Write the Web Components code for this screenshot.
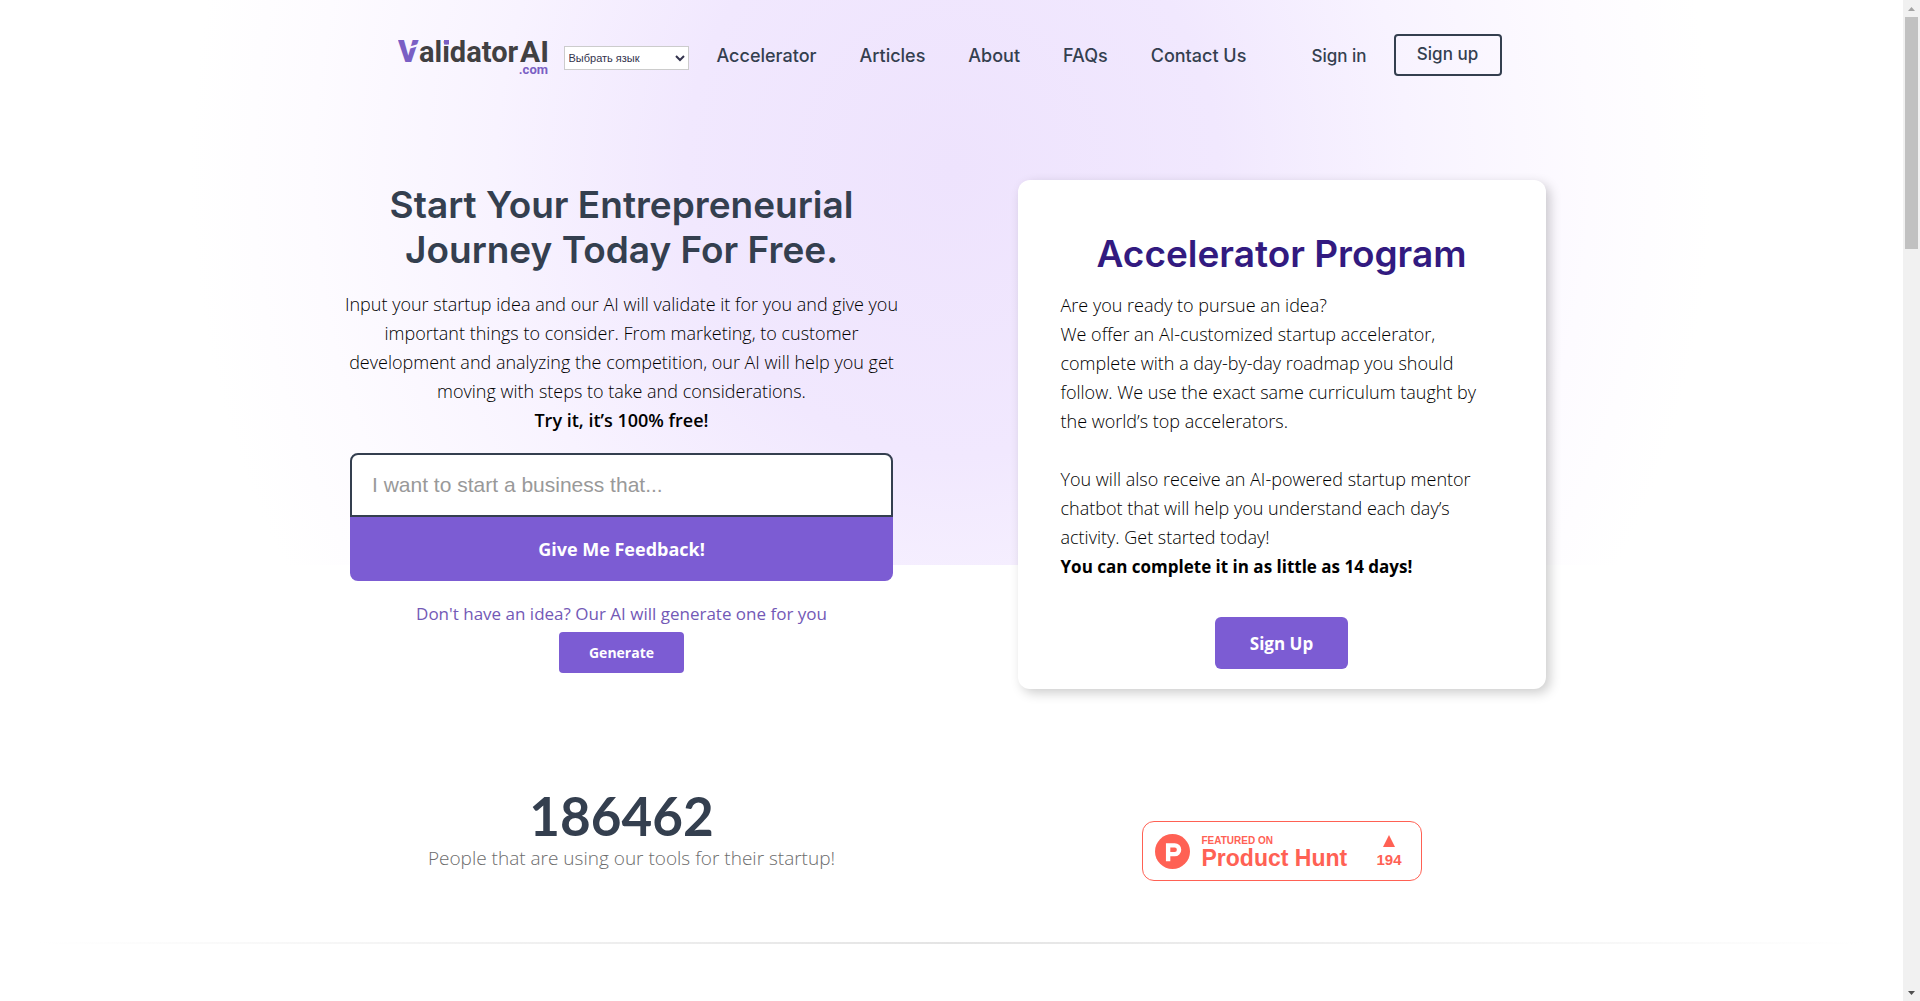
<!DOCTYPE html>
<html lang="en">
<head>
<meta charset="utf-8">
<title>ValidatorAI</title>
<style>
  body { margin: 0; background: #fff; font-family: "Open Sans", "Noto Sans", sans-serif; color: #000; }
  promo-card b { font-size: 17px; font-weight: 700; }
</style>
</head>
<body>
<app-shell>
  <site-header></site-header>
  <hero-section>
    <idea-form slot="left"></idea-form>
    <promo-card slot="right" heading="Accelerator Program" action="Sign Up">
      <p>Are you ready to pursue an idea?<br>We offer an AI-customized startup accelerator,<br>complete with a day-by-day roadmap you should<br>follow. We use the exact same curriculum taught by<br>the world’s top accelerators.</p>
      <p>You will also receive an AI-powered startup mentor<br>chatbot that will help you understand each day’s<br>activity. Get started today!<br><b>You can complete it in as little as 14 days!</b></p>
    </promo-card>
  </hero-section>
  <stats-row>
    <user-counter slot="left" value="186462">People that are using our tools for their startup!</user-counter>
    <hunt-badge slot="right" votes="194"></hunt-badge>
  </stats-row>
</app-shell>

<script>
const define = (name, html, fill) => customElements.define(name, class extends HTMLElement {
  constructor() {
    super();
    this.attachShadow({ mode: 'open' }).innerHTML = '<style>*, :host { box-sizing: border-box; }</style>' + html;
  }
  connectedCallback() { if (fill) fill(this, this.shadowRoot); }
});

define('app-shell', `
<style>
  :host { display: grid; grid-template-columns: minmax(0, 1fr) 17px; height: 100vh; overflow: hidden; }
  main { overflow: hidden; background: radial-gradient(ellipse 40% 820px at 50% 170px, #eee3fd 0%, #f1e8fe 35%, #f8f3ff 60%, #fdfbff 84%, #fff 100%) no-repeat 0 0 / 100% 565px; }
</style>
<main><slot></slot></main>
<scroll-rail></scroll-rail>`);

define('scroll-rail', `
<style>
  :host { display: flex; flex-direction: column; align-items: center; background: #f1f1f1; }
  svg { display: block; width: 17px; height: 17px; }
  .track { flex: 1; width: 13px; }
  .thumb { height: 24%; background: #c1c1c1; }
</style>
<svg viewBox="0 0 17 17"><path d="M5 11h7L8.500 7z" fill="#a3a3a3"/></svg>
<div class="track"><div class="thumb"></div></div>
<svg viewBox="0 0 17 17"><path d="M5 7h7l-3.500 4z" fill="#505050"/></svg>`);

define('brand-logo', `
<style>
  :host { display: block; }
  a, svg { display: block; }
  svg { width: 154px; height: 48px; }
  text { font-family: Roboto, sans-serif; font-weight: 700; }
  .v { font-weight: 900; }
</style>
<a href="#" aria-label="ValidatorAI.com">
<svg viewBox="0 0 154 48">
  <text class="v" x="0" y="31" font-size="31" fill="#7a5fc4">V</text>
  <path d="M12 16.500l14-4" stroke="#fbf8ff" stroke-width="2"/>
  <text x="21" y="31" font-size="29" fill="#414042">alidator</text>
  <path d="M46 9h5v4.500h-5z" fill="#7a5fc4"/>
  <text x="151" y="31" font-size="30" text-anchor="end" fill="#414042">AI</text>
  <text x="150" y="43" font-size="13" text-anchor="end" fill="#7a5fc4">.com</text>
</svg></a>`);

define('language-select', `
<style>
  :host { display: block; }
  select { display: block; width: 125px; height: 24px; padding: 0; border: 1px solid #ccc; border-radius: 0; background: #fff; color: #33334d; font: 11px "Liberation Sans", Arial, sans-serif; }
</style>
<select aria-label="Выбрать язык"><option>Выбрать язык</option></select>`);

define('site-header', `
<style>
  :host { display: block; padding: 34px 4px 0 0; font: 500 17px/44px Inter, sans-serif; }
  .bar { display: flex; width: 58%; min-width: 1104px; height: 42px; margin: 0 auto; align-items: center; }
  brand-logo { margin-right: 12px; }
  language-select { margin-top: 6px; }
  nav { display: flex; flex: 1; gap: 43px; margin-left: 28px; white-space: nowrap; font-size: 18px; }
  a { color: #343f4f; text-decoration: none; }
  nav a, .in { padding-top: 2px; }
  .in { margin-right: 27px; }
  .up { width: 108px; height: 42px; line-height: 36px; text-align: center; border: 2px solid #343f4f; border-radius: 4px; }
</style>
<header class="bar">
  <brand-logo></brand-logo>
  <language-select></language-select>
  <nav><a href="#">Accelerator</a><a href="#">Articles</a><a href="#">About</a><a href="#">FAQs</a><a href="#">Contact Us</a></nav>
  <a class="in" href="#">Sign in</a>
  <a class="up" href="#">Sign up</a>
</header>`);

const columns = `
  .row { display: grid; grid-template-columns: 1fr 1fr; align-items: start; max-width: 1320px; margin: 0 auto; }`;

define('hero-section', `
<style>
  :host { display: block; padding-top: 104px; }${columns}
</style>
<section class="row"><slot name="left"></slot><slot name="right"></slot></section>`);

define('stats-row', `
<style>
  :host { display: block; padding-top: 89px; }${columns}
  hr { height: 2px; margin: 61px 0 0; border: 0; background: linear-gradient(90deg, #fff 2%, #e4e4e4 50%, #fff 98%); }
</style>
<section class="row"><slot name="left"></slot><slot name="right"></slot></section>
<hr>`);

define('idea-form', `
<style>
  :host { display: block; text-align: center; }
  h1 { margin: 2px 0 18px; color: #343f4f; font: 600 37px/45px Inter, sans-serif; }
  p { margin: 0; font-size: 18px; font-weight: 350; line-height: 29px; }
  b { font-weight: 600; }
  form { width: 543px; margin: 18px auto 0; }
  input { display: block; width: 100%; height: 64px; padding: 0 20px; border: 2px solid #343f4f; border-radius: 8px 8px 0 0; background: #fff; font: 21px "Liberation Sans", Arial, sans-serif; }
  input::placeholder { color: #999; }
  button { border: 0; background: #7c5cd3; color: #fff; font-family: inherit; font-weight: 700; }
  .send { display: block; width: 100%; height: 64px; border-radius: 0 0 8px 8px; font-size: 18px; }
  .hint { margin-top: 18px; font-weight: 500; font-size: 17px; color: #7359b6; }
  .gen { width: 125px; height: 41px; margin-top: 4px; border-radius: 4px; font-size: 14px; }
</style>
<h1>Start Your Entrepreneurial<br>Journey Today For Free.</h1>
<p>Input your startup idea and our AI will validate it for you and give you<br>important things to consider. From marketing, to customer<br>development and analyzing the competition, our AI will help you get<br>moving with steps to take and considerations.<br><b>Try it, it’s 100% free!</b></p>
<form>
  <input type="text" aria-label="Your business idea" placeholder="I want to start a business that...">
  <button class="send" type="button">Give Me Feedback!</button>
</form>
<p class="hint">Don't have an idea? Our AI will generate one for you</p>
<button class="gen" type="button">Generate</button>`);

define('promo-card', `
<style>
  :host { display: block; width: 80%; margin: 0 auto; padding: 51px 43px 20px; border-radius: 12px; background: #fff; box-shadow: 4px 4px 12px rgba(0,0,0,.2); text-align: center; }
  h2 { margin: 0 0 15px; color: #321a80; font: 600 37px/45px Inter, sans-serif; }
  .copy { text-align: left; white-space: nowrap; font-size: 18px; font-weight: 350; line-height: 29px; }
  ::slotted(p) { margin: 0 0 29px; }
  button { display: block; width: 133px; height: 52px; margin: 36px auto 0; border: 0; border-radius: 6px; background: #7c5cd3; color: #fff; font: 700 17px "Open Sans", sans-serif; }
</style>
<h2></h2>
<div class="copy"><slot></slot></div>
<button type="button"></button>`, (el, root) => {
  root.querySelector('h2').textContent = el.getAttribute('heading');
  root.querySelector('button').textContent = el.getAttribute('action');
});

define('user-counter', `
<style>
  :host { display: block; padding-top: 10px; text-align: center; color: #6c6c6c; font-size: 19px; font-weight: 350; line-height: 28px; }
  strong { display: block; color: #343f4f; font: 700 53px/56px Lato, sans-serif; }
  .label { padding-left: 20px; }
</style>
<strong></strong><div class="label"><slot></slot></div>`, (el, root) => {
  root.querySelector('strong').textContent = el.getAttribute('value');
});

define('hunt-badge', `
<style>
  :host { display: block; width: 280px; margin: 43px auto 0; color: #ff6154; font-family: "Liberation Sans", Arial, sans-serif; font-weight: 700; }
  a { display: flex; align-items: center; height: 60px; padding: 0 19px 0 12px; border: 1px solid #ff6154; border-radius: 12px; background: #fff; color: inherit; text-decoration: none; }
  .p { width: 35px; height: 35px; margin-right: 12px; }
  .name { flex: 1; padding-top: 3px; font-size: 23px; line-height: 25px; }
  small { display: block; font-size: 10px; line-height: 11px; }
  .votes { padding-top: 2px; text-align: center; font-size: 15px; line-height: 19px; }
  .votes svg { display: block; width: 12px; height: 12px; margin: 0 auto 3px; }
</style>
<a href="#">
  <svg class="p" viewBox="0 0 40 40"><circle cx="20" cy="20" r="20" fill="#ff6154"/><path d="M15 31V13h7.500a5 5 0 0 1 0 10H15" fill="none" stroke="#fff" stroke-width="5"/></svg>
  <span class="name"><small>FEATURED ON</small>Product Hunt</span>
  <span class="votes"><svg viewBox="0 0 12 12"><path d="M6 0l6 12H0z" fill="#ff6154"/></svg><span></span></span>
</a>`, (el, root) => {
  root.querySelector('.votes span').textContent = el.getAttribute('votes');
});
</script>
</body>
</html>
